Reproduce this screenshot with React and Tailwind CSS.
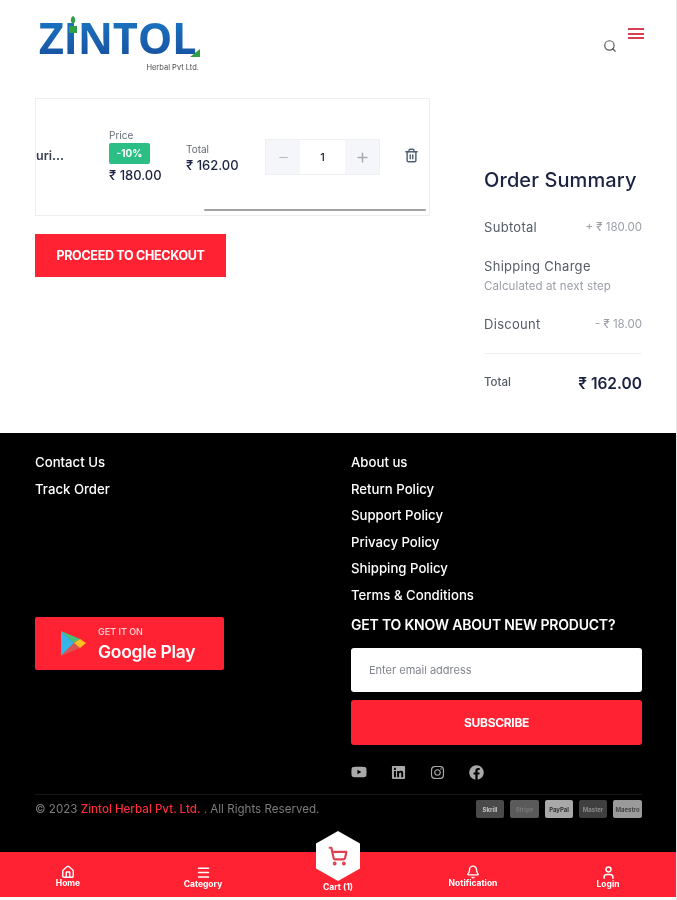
import React from 'react';
import { Search, Minus, Plus, Trash2, Home, User, Bell, Menu, ShoppingCart } from 'lucide-react';
import { FaYoutube, FaLinkedin, FaInstagram, FaFacebook } from 'react-icons/fa';

const leftLinks = ['Contact Us', 'Track Order'];
const rightLinks = ['About us', 'Return Policy', 'Support Policy', 'Privacy Policy', 'Shipping Policy', 'Terms & Conditions'];
const payments = [
  { label: 'Skrill', className: 'w-[28px] bg-[#4a4a4a] text-[#c4c4c4]' },
  { label: 'Stripe', className: 'w-[29px] bg-[#5a5a5a] text-[#777777]' },
  { label: 'PayPal', className: 'w-[28px] bg-[#a8a8a8] text-[#333333]' },
  { label: 'Master', className: 'w-[28px] bg-[#3f3f3f] text-[#888888]' },
  { label: 'Maestro', className: 'w-[29px] bg-[#9a9a9a] text-[#444444]' },
];

function Logo() {
  return (
    <div className="flex w-[163px] flex-col items-end">
      <div className="relative flex h-[46px] w-[163px] items-center justify-center bg-gradient-to-b from-[#1b78c4] to-[#174f9e] bg-clip-text font-['Open_Sans',sans-serif] text-[43.5px] font-bold leading-none tracking-[-0.3px] text-transparent">
        ZINTOL
        <svg className="absolute left-[32px] top-[1px]" width="10" height="17" viewBox="0 0 10 17">
          <path d="M5 0 C8 2 8 6 5 8 C2 6 2 2 5 0 Z" fill="#2f9e44" />
          <path d="M1 10 L9 10 L9 17 L1 17 Z" fill="#2f9e44" />
        </svg>
        <svg className="absolute right-[-1px] bottom-[4px]" width="26" height="8" viewBox="0 0 26 8">
          <path d="M0 8 L16 8 L26 0 L26 8 Z" fill="#2f9e44" />
        </svg>
      </div>
      <div className="mt-[3px] text-[7.5px] leading-none text-[#4b4b4b]">Herbal Pvt Ltd.</div>
    </div>
  );
}

function NavItem({ icon, label }) {
  return (
    <div className="flex w-[80px] flex-col items-center text-[8.5px] font-bold leading-[9px] text-white">
      {icon}
      <span>{label}</span>
    </div>
  );
}

function SummaryRow({ label, value }) {
  return (
    <div className="flex items-center justify-between">
      <span className="text-[13px] tracking-[0.3px] text-[#555b66]">{label}</span>
      <span className="text-[11.5px] text-[#9a9ea6]">{value}</span>
    </div>
  );
}

export default function App() {
  return (
    <div className="relative h-[900px] w-[677px] overflow-hidden border-r border-[#e6e6e6] bg-white font-['Inter',sans-serif] blur-[0.4px]">
      <header className="flex h-[98px] items-start justify-between pl-[36px] pr-[32px] pt-[15px]">
        <Logo />
        <div className="flex items-start gap-[11px] pt-[13px]">
          <Search className="mt-[11px] h-[14px] w-[14px] text-[#555555]" strokeWidth={2} />
          <div className="flex w-[16px] flex-col gap-[2.5px]">
            <span className="h-[2px] bg-[#d6404f]" />
            <span className="h-[2px] bg-[#d6404f]" />
            <span className="h-[2px] bg-[#d6404f]" />
          </div>
        </div>
      </header>

      <main className="flex h-[335px] justify-between pl-[35px] pr-[34px]">
        <div className="w-[395px]">
          <div className="relative flex h-[118px] items-center border border-[#eeeeee]">
            <span className="mt-[-2px] w-[73px] text-[12.5px] font-semibold text-[#3b4152]">uri...</span>
            <div className="mt-[-2px] w-[77px]">
              <div className="text-[10px] leading-[13px] text-[#666b75]">Price</div>
              <div className="mt-[1px] flex h-[21px] w-[41px] items-center justify-center rounded-[2px] bg-[#2bbf86] text-[10px] font-bold text-white">-10%</div>
              <div className="mt-[3px] text-[13px] font-medium leading-[17px] text-[#1c2340]">₹ 180.00</div>
            </div>
            <div className="mt-[3px] w-[79px]">
              <div className="text-[10px] leading-[13px] text-[#666b75]">Total</div>
              <div className="mt-[1px] text-[13px] font-medium leading-[17px] text-[#1c2340]">₹ 162.00</div>
            </div>
            <div className="flex h-[36px] w-[115px] border border-[#f0f0f3]">
              <div className="flex w-[34px] items-center justify-center bg-[#f5f6f9]">
                <Minus className="h-[13px] w-[13px] text-[#b5b8c0]" />
              </div>
              <div className="flex flex-1 items-center justify-center text-[11px] font-medium text-[#1c2340]">1</div>
              <div className="flex w-[34px] items-center justify-center bg-[#f5f6f9]">
                <Plus className="h-[15px] w-[15px] text-[#a8abb3]" strokeWidth={2.4} />
              </div>
            </div>
            <Trash2 className="ml-[24px] mt-[-3px] h-[15px] w-[15px] text-[#4f5f75]" strokeWidth={2.3} />
            <div className="absolute bottom-[4px] left-[168px] right-[3px] h-[2px] rounded-full bg-[#a3a3a3]" />
          </div>
          <button className="mt-[18px] flex h-[43px] w-[191px] items-center justify-center bg-[#fe2233] pt-[1px] text-[12.5px] font-bold tracking-[-0.3px] text-white">
            PROCEED TO CHECKOUT
          </button>
        </div>

        <aside className="w-[158px] pt-[69px]">
          <h2 className="text-[20px] font-medium leading-[26px] tracking-[0.1px] text-[#1c2340]">Order Summary</h2>
          <div className="mt-[25px]">
            <SummaryRow label="Subtotal" value="+ ₹ 180.00" />
          </div>
          <div className="mt-[20px] text-[13px] leading-[16px] tracking-[0.3px] text-[#555b66]">Shipping Charge</div>
          <div className="mt-[5px] text-[11.5px] leading-[14px] tracking-[0.1px] text-[#9a9ea6]">Calculated at next step</div>
          <div className="mt-[22px]">
            <SummaryRow label="Discount" value="- ₹ 18.00" />
          </div>
          <div className="mt-[19px] flex items-start justify-between border-t border-[#f0f0f0] pt-[20px]">
            <span className="text-[11.5px] font-medium leading-[16px] text-[#555b66]">Total</span>
            <span className="text-[15.5px] font-semibold leading-[20px] text-[#1c2340]">₹ 162.00</span>
          </div>
        </aside>
      </main>

      <footer className="h-[419px] w-[676px] bg-black pl-[35px] pr-[34px] pt-[21px] text-white">
        <div className="flex">
          <div className="flex w-[316px] flex-col">
            <div className="flex flex-col gap-[9px]">
              {leftLinks.map((link) => (
                <a key={link} className="text-[13.2px] font-medium leading-[17.5px]">{link}</a>
              ))}
            </div>
            <div className="mt-[119px] flex h-[53px] w-[189px] items-center rounded-[2px] bg-[#fe2233] pl-[25px]">
              <svg width="27" height="27" viewBox="0 0 27 27">
                <path d="M1 1 L1 26 L14 13 Z" fill="#35b5e8" />
                <path d="M1 1 L14 13 L20 9 Z" fill="#43c47a" />
                <path d="M1 26 L14 13 L20 18 Z" fill="#d9534f" />
                <path d="M14 13 L20 9 L26 13 L20 18 Z" fill="#fbbf24" />
              </svg>
              <div className="ml-[11px]">
                <div className="text-[9px] font-medium leading-[11px] text-[#ffd5d8]">GET IT ON</div>
                <div className="mt-[4px] text-[17.5px] font-semibold leading-[21px] tracking-[-0.3px]">Google Play</div>
              </div>
            </div>
          </div>
          <div className="flex-1">
            <div className="flex flex-col gap-[9px]">
              {rightLinks.map((link) => (
                <a key={link} className="text-[13.2px] font-medium leading-[17.5px]">{link}</a>
              ))}
            </div>
            <h3 className="mt-[12px] text-[14px] font-semibold leading-[18px] tracking-[-0.2px]">GET TO KNOW ABOUT NEW PRODUCT?</h3>
            <div className="mt-[14px] flex h-[44px] items-center rounded-[3px] bg-white pl-[18px] text-[11px] text-[#80848c]">Enter email address</div>
            <button className="mt-[8px] flex h-[45px] w-full items-center justify-center rounded-[3px] bg-[#fe2233] text-[12px] font-bold tracking-[-0.3px]">SUBSCRIBE</button>
            <div className="mt-[19px] flex items-center gap-[24px] text-[#a9a9a9]">
              <FaYoutube className="h-[16px] w-[16px]" />
              <FaLinkedin className="h-[15px] w-[15px]" />
              <FaInstagram className="h-[15px] w-[15px]" />
              <FaFacebook className="h-[15px] w-[15px]" />
            </div>
          </div>
        </div>
        <div className="mt-[14px] flex items-center justify-between border-t border-[#161616] pt-[5px]">
          <div className="mt-[1px] text-[11.6px] text-[#7c7c7c]">
            © 2023 <span className="font-medium text-[#ff2a3a]">Zintol Herbal Pvt. Ltd.</span> . All Rights Reserved.
          </div>
          <div className="flex gap-[6px]">
            {payments.map((p) => (
              <div key={p.label} className={`flex h-[18px] items-center justify-center rounded-[2px] text-[6px] font-bold ${p.className}`}>{p.label}</div>
            ))}
          </div>
        </div>
      </footer>

      <nav className="flex h-[45px] w-[676px] items-center justify-between bg-[#fe2233] pl-[28px] pr-[28px] pt-[4px]">
        <NavItem icon={<Home className="h-[14px] w-[14px]" strokeWidth={2.4} />} label="Home" />
        <NavItem icon={<Menu className="h-[15px] w-[15px]" strokeWidth={2.4} />} label="Category" />
        <div className="w-[80px]" />
        <NavItem icon={<Bell className="h-[14px] w-[14px]" strokeWidth={2.4} />} label="Notification" />
        <NavItem icon={<User className="h-[15px] w-[15px]" strokeWidth={2.4} />} label="Login" />
      </nav>

      <div className="absolute left-[298px] top-[831px] flex w-[80px] flex-col items-center">
        <div className="relative flex h-[50px] w-[44px] items-center justify-center">
          <svg className="absolute inset-0" width="44" height="50" viewBox="0 0 44 50">
            <path d="M22 0 L44 12.5 L44 37.5 L22 50 L0 37.5 L0 12.5 Z" fill="#ffffff" />
          </svg>
          <ShoppingCart className="relative h-[20px] w-[20px] text-[#e0404e]" strokeWidth={2.6} />
        </div>
        <span className="mt-[1px] text-[8.5px] font-bold leading-[10px] text-white">Cart (1)</span>
      </div>
    </div>
  );
}
